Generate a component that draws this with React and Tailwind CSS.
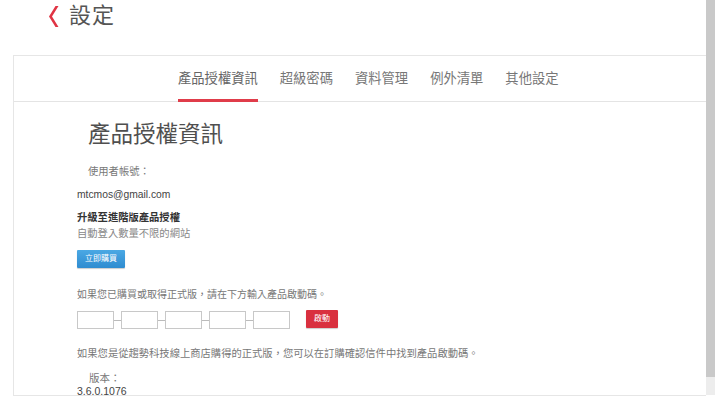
import React from "react";

const tabs = ["產品授權資訊", "超級密碼", "資料管理", "例外清單", "其他設定"];

export default function App() {
  return (
    <div
      className="relative w-[728px] h-[397px] bg-white overflow-hidden flex"
      style={{ fontFamily: '"Liberation Sans", "Noto Sans CJK TC", sans-serif' }}
    >
      <div className="w-[706px] shrink-0 flex flex-col">
        <div className="h-[55px] flex items-start pl-[48px] pt-[5px] gap-[9px]">
          <svg width="12" height="21" viewBox="0 0 12 21" className="mt-[1px]">
            <polygon points="7.5,0 10.5,0 4,10.5 10.5,21 7.5,21 1,10.5" fill="#e03444" />
          </svg>
          <span className="text-[22px] leading-[22px] text-[#555] tracking-[1px]">設定</span>
        </div>
        <div className="ml-[13px] h-[341px] border-t border-l border-b border-[#e6e6e6] overflow-hidden">
          <div className="h-[46px] flex items-stretch border-b border-[#e4e4e4] pl-[164px] gap-[22px]">
            {tabs.map((t, i) => (
              <div
                key={t}
                className={
                  i === 0
                    ? "flex items-center text-[13.3px] text-[#666] border-b-[3px] border-[#e03c4a] mb-[-1px] pt-[3px]"
                    : "flex items-center text-[13.3px] text-[#777] mb-[-1px]"
                }
              >
                {t}
              </div>
            ))}
          </div>
          <div className="pl-[63px] flex flex-col items-start">
            <div className="ml-[11px] mt-[20px] text-[22.5px] leading-[26px] text-[#4f4f4f]">產品授權資訊</div>
            <div className="ml-[11px] mt-[17px] text-[10.3px] leading-[14px] text-[#777]">使用者帳號：</div>
            <div className="mt-[9px] text-[10.3px] leading-[14px] text-[#444]">mtcmos@gmail.com</div>
            <div className="mt-[9px] text-[10.3px] leading-[14px] text-[#333] font-bold">升級至進階版產品授權</div>
            <div className="mt-[2px] text-[10.3px] leading-[14px] text-[#888]">自動登入數量不限的網站</div>
            <div className="mt-[9px] w-[48px] h-[18px] rounded-[1px] bg-gradient-to-b from-[#4aa8e4] to-[#2f8cd0] text-white text-[8px] flex items-center justify-center shadow-[0_1px_1px_rgba(0,0,0,0.2)]">
              立即購買
            </div>
            <div className="mt-[20px] text-[10px] leading-[14px] text-[#777]">
              如果您已購買或取得正式版，請在下方輸入產品啟動碼。
            </div>
            <div className="mt-[9px] flex items-center">
              {[0, 1, 2, 3, 4].map((i) => (
                <React.Fragment key={i}>
                  {i > 0 && <div className="w-[7px] h-px bg-[#bbb]" />}
                  <div className="w-[37px] h-[18px] border border-[#c8c8c8] bg-white" />
                </React.Fragment>
              ))}
              <div className="ml-[16px] -mt-[2px] w-[32px] h-[18px] rounded-[1px] bg-[#d9303f] text-white text-[8px] flex items-center justify-center shadow-[0_1px_1px_rgba(0,0,0,0.2)]">
                啟動
              </div>
            </div>
            <div className="mt-[18px] text-[10.3px] leading-[14px] text-[#777]">
              如果您是從趨勢科技線上商店購得的正式版，您可以在訂購確認信件中找到產品啟動碼。
            </div>
            <div className="ml-[12px] mt-[11px] text-[10.5px] leading-[12px] text-[#777]">版本：</div>
            <div className="mt-px text-[10.5px] leading-[12px] text-[#444]">3.6.0.1076</div>
          </div>
        </div>
      </div>
      <div className="w-[9px] shrink-0 flex flex-col">
        <div className="h-[377px] bg-[#c9c9c9]" />
        <div className="h-[18px] bg-[#ededed]" />
      </div>
    </div>
  );
}
